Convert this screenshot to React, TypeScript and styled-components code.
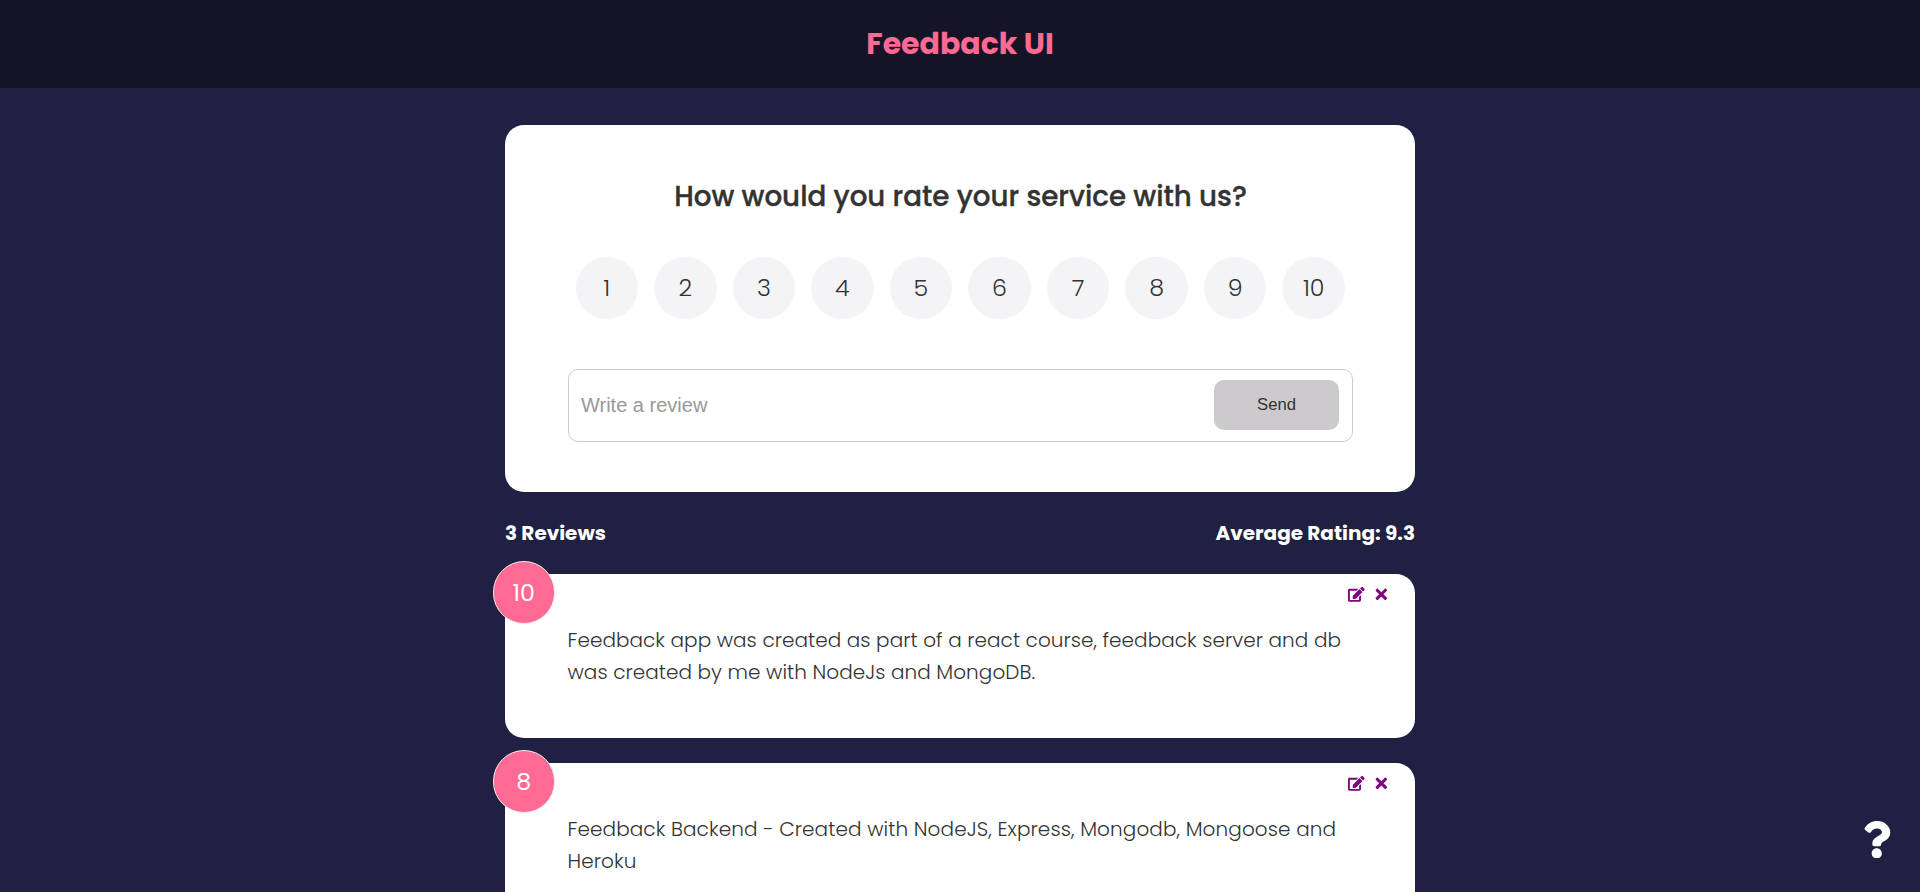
import React, { useState } from "react";
import styled, { createGlobalStyle } from "styled-components";
import { FaEdit, FaQuestion, FaTimes } from "react-icons/fa";

const GlobalStyle = createGlobalStyle`
  *, *::before, *::after { box-sizing: border-box; margin: 0; padding: 0; }
  html, body { height: 100%; overflow: hidden; }
  body {
    background: #202142;
    color: #333;
    font-family: Poppins, Inter, sans-serif;
  }
`;

const Header = styled.header`
  display: flex;
  align-items: center;
  justify-content: center;
  height: 88px;
  background: #151426;
  color: #ff6a95;
`;

const Title = styled.h1`
  font-size: 30px;
  font-weight: 700;
  line-height: 40px;
  white-space: nowrap;
`;

const Container = styled.main`
  width: 910px;
  margin: 37px auto 0;
`;

const Card = styled.section`
  position: relative;
  margin-bottom: 25px;
  padding: 50px 62px 50px 62.5px;
  border-radius: 19px;
  background: #fff;
`;

const FormCard = styled(Card)`
  height: 367px;
  padding-left: 63px;
`;

const Question = styled.h2`
  font-size: 27.75px;
  font-weight: 500;
  -webkit-text-stroke: 0.35px currentColor;
  line-height: 44px;
  text-align: center;
  white-space: nowrap;
`;

const Ratings = styled.ul`
  display: flex;
  justify-content: space-between;
  margin: 38px 0 50px;
  padding: 0 8px 0 7.5px;
  list-style: none;
`;

const RatingOption = styled.li<{ $selected: boolean }>`
  display: flex;
  align-items: center;
  justify-content: center;
  width: 62.5px;
  height: 62px;
  padding-bottom: 2px;
  border-radius: 50%;
  background: ${(p) => (p.$selected ? "#ff6a95" : "#f4f3f6")};
  color: ${(p) => (p.$selected ? "#fff" : "#333")};
  font-size: 23.75px;
  font-weight: 300;
  cursor: pointer;
`;

const InputGroup = styled.div`
  display: flex;
  align-items: center;
  height: 73px;
  padding: 0 13px 1px 12px;
  border: 1px solid #ccc;
  border-radius: 10px;
`;

const ReviewInput = styled.input`
  flex: 1;
  min-width: 0;
  border: none;
  outline: none;
  background: transparent;
  color: #333;
  font: 20px "Liberation Sans", Arial, sans-serif;
  &::placeholder { color: #999; opacity: 1; }
`;

const SendButton = styled.button`
  width: 125px;
  height: 50px;
  border: none;
  border-radius: 10px;
  background: #cccacd;
  color: #333;
  font: 16.67px "Liberation Sans", Arial, sans-serif;
`;

const Stats = styled.div`
  display: flex;
  align-items: center;
  justify-content: space-between;
  height: 32px;
  margin-bottom: 25px;
  color: #fff;
`;

const Stat = styled.p`
  font-size: 20px;
  font-weight: 700;
  white-space: nowrap;
`;

const ReviewCard = styled(Card)`
  height: 164px;
`;

const Badge = styled.div`
  position: absolute;
  top: -13px;
  left: -12.5px;
  display: flex;
  align-items: center;
  justify-content: center;
  width: 62.5px;
  height: 62.5px;
  padding-top: 1px;
  border: 1px solid #eee;
  border-radius: 50%;
  background: #ff6a95;
  color: #fff;
  font-size: 23.75px;
  font-weight: 400;
`;

const Actions = styled.div`
  position: absolute;
  top: 12px;
  right: 25px;
  display: flex;
  gap: 8.5px;
`;

const IconButton = styled.button`
  display: flex;
  border: none;
  background: none;
  color: purple;
  font-size: 16.67px;
  cursor: pointer;
`;

const ReviewText = styled.p<{ $spacing: number }>`
  font-size: 20px;
  font-weight: 300;
  line-height: 32px;
  letter-spacing: ${(p) => p.$spacing}px;
`;

const HelpLink = styled.a`
  position: fixed;
  right: 25px;
  bottom: 34px;
  display: flex;
  color: #fff;
  font-size: 37.5px;
`;

const reviews = [
  {
    rating: 10,
    spacing: 0.05,
    text: "Feedback app was created as part of a react course, feedback server and db was created by me with NodeJs and MongoDB.",
  },
  {
    rating: 8,
    spacing: 0.1,
    text: "Feedback Backend - Created with NodeJS, Express, Mongodb, Mongoose and Heroku",
  },
];

export default function App() {
  const [selected, setSelected] = useState(0);
  return (
    <>
      <GlobalStyle />
      <Header>
        <Title>Feedback UI</Title>
      </Header>
      <Container>
        <FormCard>
          <Question>How would you rate your service with us?</Question>
          <Ratings>
            {Array.from({ length: 10 }, (_, i) => i + 1).map((n) => (
              <RatingOption key={n} $selected={n === selected} onClick={() => setSelected(n)}>
                {n}
              </RatingOption>
            ))}
          </Ratings>
          <InputGroup>
            <ReviewInput placeholder="Write a review" />
            <SendButton disabled>Send</SendButton>
          </InputGroup>
        </FormCard>
        <Stats>
          <Stat>3 Reviews</Stat>
          <Stat>Average Rating: 9.3</Stat>
        </Stats>
        {reviews.map((review) => (
          <ReviewCard key={review.rating}>
            <Badge>{review.rating}</Badge>
            <Actions>
              <IconButton aria-label="Edit"><FaEdit /></IconButton>
              <IconButton aria-label="Delete"><FaTimes /></IconButton>
            </Actions>
            <ReviewText $spacing={review.spacing}>{review.text}</ReviewText>
          </ReviewCard>
        ))}
      </Container>
      <HelpLink aria-label="About"><FaQuestion /></HelpLink>
    </>
  );
}
